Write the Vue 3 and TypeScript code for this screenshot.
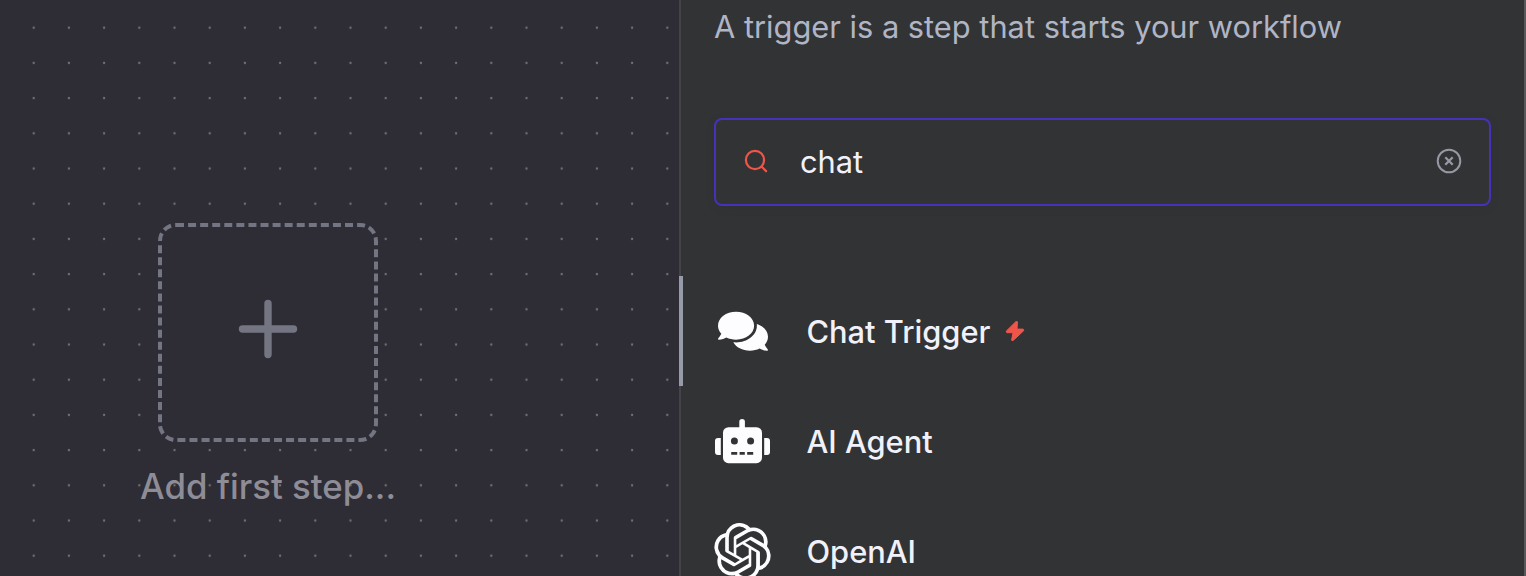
<script setup lang="ts">
interface NodeItem {
  id: 'chat' | 'agent' | 'openai'
  label: string
  trigger?: boolean
}

const items: NodeItem[] = [
  { id: 'chat', label: 'Chat Trigger', trigger: true },
  { id: 'agent', label: 'AI Agent' },
  { id: 'openai', label: 'OpenAI' },
]
</script>

<template>
  <div class="app">
    <section class="canvas">
      <svg class="dots" width="679" height="576" aria-hidden="true">
        <defs>
          <pattern id="grid" x="16.1" y="10.1" width="35.2" height="35.2" patternUnits="userSpaceOnUse">
            <circle cx="17.6" cy="17.6" r="1.15" fill="#737274" />
          </pattern>
        </defs>
        <rect width="679" height="576" fill="url(#grid)" />
      </svg>
      <div class="first-step">
        <button class="add" aria-label="Add first step">
          <svg width="60" height="60" viewBox="0 0 60 60">
            <path d="M30 4.5v51M4.5 30h51" stroke="#747582" stroke-width="7.4" stroke-linecap="round" />
          </svg>
        </button>
        <span class="caption">Add first step...</span>
      </div>
    </section>

    <aside class="panel">
      <div class="handle"></div>
      <p class="subtitle">A trigger is a step that starts your workflow</p>
      <div class="search">
        <svg class="search-icon" width="24" height="24" viewBox="0 0 24 24" fill="none" stroke="#f0554a" stroke-width="2.2" stroke-linecap="round">
          <circle cx="11" cy="11" r="9.1" />
          <path d="M17.7 17.7l4.4 4.4" />
        </svg>
        <span class="query">chat</span>
        <svg width="26" height="26" viewBox="0 0 26 26" fill="none" stroke="#9698a3" stroke-width="2">
          <circle cx="13" cy="13" r="11.3" />
          <path d="M9.3 9.3l7.4 7.4M16.7 9.3l-7.4 7.4" stroke-width="2.3" />
        </svg>
      </div>
      <ul class="list">
        <li v-for="item in items" :key="item.id" class="row">
          <span class="icon">
            <svg v-if="item.id === 'chat'" class="chat" width="50" height="44.6" viewBox="0 0 576 512" fill="#fdfdff">
              <path d="M416 192c0-88.4-93.1-160-208-160S0 103.6 0 192c0 34.3 14.1 65.9 38 92-13.4 30.2-35.5 54.2-35.8 54.5-2.2 2.3-2.8 5.7-1.5 8.7S4.8 352 8 352c36.6 0 66.9-12.3 88.7-25 32.2 15.7 70.3 25 111.3 25 114.9 0 208-71.6 208-160zm122 220c23.9-26 38-57.7 38-92 0-66.9-53.5-124.2-129.3-148.1.9 6.6 1.3 13.3 1.3 20.1 0 105.9-107.7 192-240 192-10.8 0-21.3-.8-31.7-1.9C207.8 439.6 281.8 480 368 480c41 0 79.1-9.2 111.3-25 21.8 12.7 52.1 25 88.7 25 3.2 0 6.1-1.9 7.3-4.8 1.3-2.9.7-6.3-1.5-8.7-.3-.3-22.4-24.2-35.8-54.5z" />
            </svg>
            <svg v-else-if="item.id === 'agent'" width="56" height="46" viewBox="0 0 56 46">
              <g fill="#fdfdff">
                <rect x="25.3" y="1" width="5.6" height="14" rx="2.8" />
                <rect x="9" y="9.2" width="39" height="36" rx="5.5" />
                <path d="M6.8 20v17H4q-3 0-3-3V23q0-3 3-3zM50.2 20v17h2.8q3 0 3-3V23q0-3-3-3z" />
              </g>
              <g fill="#323334">
                <circle cx="20.4" cy="23" r="3.5" />
                <circle cx="36.6" cy="23" r="3.5" />
                <path d="M17.2 34h6v2.8h-6zM25.6 34h5.2v2.8h-5.2zM33.2 34h6v2.8h-6z" />
              </g>
            </svg>
            <svg v-else width="57" height="57" viewBox="0 0 24 24" fill="#fdfdff">
              <path d="M22.2819 9.8211a5.9847 5.9847 0 0 0-.5157-4.9108 6.0462 6.0462 0 0 0-6.5098-2.9A6.0651 6.0651 0 0 0 4.9807 4.1818a5.9847 5.9847 0 0 0-3.9977 2.9 6.0462 6.0462 0 0 0 .7427 7.0966 5.98 5.98 0 0 0 .511 4.9107 6.051 6.051 0 0 0 6.5146 2.9001A5.9847 5.9847 0 0 0 13.2599 24a6.0557 6.0557 0 0 0 5.7718-4.2058 5.9894 5.9894 0 0 0 3.9977-2.9001 6.0557 6.0557 0 0 0-.7475-7.0729zm-9.022 12.6081a4.4755 4.4755 0 0 1-2.8764-1.0408l.1419-.0804 4.7783-2.7582a.7948.7948 0 0 0 .3927-.6813v-6.7369l2.02 1.1686a.071.071 0 0 1 .038.052v5.5826a4.504 4.504 0 0 1-4.4945 4.4944zm-9.6607-4.1254a4.4708 4.4708 0 0 1-.5346-3.0137l.142.0852 4.783 2.7582a.7712.7712 0 0 0 .7806 0l5.8428-3.3685v2.3324a.0804.0804 0 0 1-.0332.0615L9.74 19.9502a4.4992 4.4992 0 0 1-6.1408-1.6464zM2.3408 7.8956a4.485 4.485 0 0 1 2.3655-1.9728V11.6a.7664.7664 0 0 0 .3879.6765l5.8144 3.3543-2.0201 1.1685a.0757.0757 0 0 1-.071 0l-4.8303-2.7865A4.504 4.504 0 0 1 2.3408 7.872zm16.5963 3.8558L13.1038 8.364 15.1192 7.2a.0757.0757 0 0 1 .071 0l4.8303 2.7913a4.4944 4.4944 0 0 1-.6765 8.1042v-5.6772a.79.79 0 0 0-.407-.667zm2.0107-3.0231l-.142-.0852-4.7735-2.7818a.7759.7759 0 0 0-.7854 0L9.409 9.2297V6.8974a.0662.0662 0 0 1 .0284-.0615l4.8303-2.7866a4.4992 4.4992 0 0 1 6.6802 4.66zM8.3065 12.863l-2.02-1.1638a.0804.0804 0 0 1-.038-.0567V6.0742a4.4992 4.4992 0 0 1 7.3757-3.4537l-.142.0805L8.704 5.459a.7948.7948 0 0 0-.3927.6813zm1.0976-2.3654l2.602-1.4998 2.6069 1.4998v2.9994l-2.5974 1.4997-2.6067-1.4997Z" />
            </svg>
          </span>
          <span class="label">{{ item.label }}</span>
          <svg v-if="item.trigger" class="bolt" width="20" height="22" viewBox="0 0 20 22">
            <path d="M11 1.5L1.2 11.2L1.8 12.7H8L6.6 20.2L8 20.6L18.8 10.6L18.2 9.1H12L12.5 1.8Z" fill="#f0554a" stroke="#f0554a" stroke-linejoin="round" />
          </svg>
        </li>
      </ul>
    </aside>
  </div>
</template>

<style>
body {
  margin: 0;
  overflow: hidden;
}
</style>

<style scoped>
.app {
  display: flex;
  width: 1526px;
  height: 576px;
  overflow: hidden;
  background: #2e2c34;
  font-family: Inter, "Liberation Sans", sans-serif;
}
.canvas {
  position: relative;
  width: 679px;
  flex: none;
}
.dots {
  position: absolute;
  inset: 0;
}
.first-step {
  position: relative;
  display: flex;
  flex-direction: column;
  align-items: center;
  width: 280px;
  margin: 223px 0 0 128px;
}
.add {
  box-sizing: border-box;
  width: 220px;
  height: 219px;
  display: flex;
  align-items: center;
  justify-content: center;
  padding: 0 0 8px;
  border: 4px dashed #747582;
  border-radius: 18px;
  background: #2e2c34;
}
.caption {
  margin-top: 22px;
  font-size: 34.8px;
  line-height: 44px;
  font-weight: 500;
  color: #8d8c97;
  white-space: nowrap;
}
.panel {
  position: relative;
  box-sizing: border-box;
  width: 847px;
  height: 576px;
  padding: 0 33px 0 33px;
  border-left: 2px solid #444448;
  border-right: 2px solid #58585a;
  background: #323334;
}
.handle {
  position: absolute;
  left: -2px;
  top: 276px;
  width: 4px;
  height: 110px;
  background: #979ba9;
}
.subtitle {
  margin: 7px 0 0;
  height: 40px;
  font-size: 30.8px;
  line-height: 40px;
  color: #b0b5c5;
  white-space: nowrap;
}
.search {
  box-sizing: border-box;
  display: flex;
  align-items: center;
  width: 777px;
  height: 88px;
  margin-top: 71px;
  padding: 0 27px 2px 28px;
  border: 2px solid #4632b8;
  border-radius: 8px;
  box-shadow: 0 2px 12px rgba(0, 0, 0, 0.06);
}
.query {
  flex: 1;
  margin-left: 32px;
  padding-top: 1px;
  font-size: 30.8px;
  line-height: 40px;
  color: #f0f1fa;
}
.list {
  list-style: none;
  margin: 70px 0 0;
  padding: 0;
}
.row {
  display: flex;
  align-items: center;
  height: 110px;
}
.icon {
  width: 56px;
  display: flex;
  justify-content: center;
  flex: none;
}
.icon svg {
  flex: none;
}
.icon .chat {
  margin-left: 1px;
}
.label {
  margin-left: 36.5px;
  padding-top: 1px;
  font-size: 30.8px;
  line-height: 40px;
  font-weight: 500;
  color: #f0f1fa;
}
.bolt {
  margin-left: 14.5px;
}
</style>
